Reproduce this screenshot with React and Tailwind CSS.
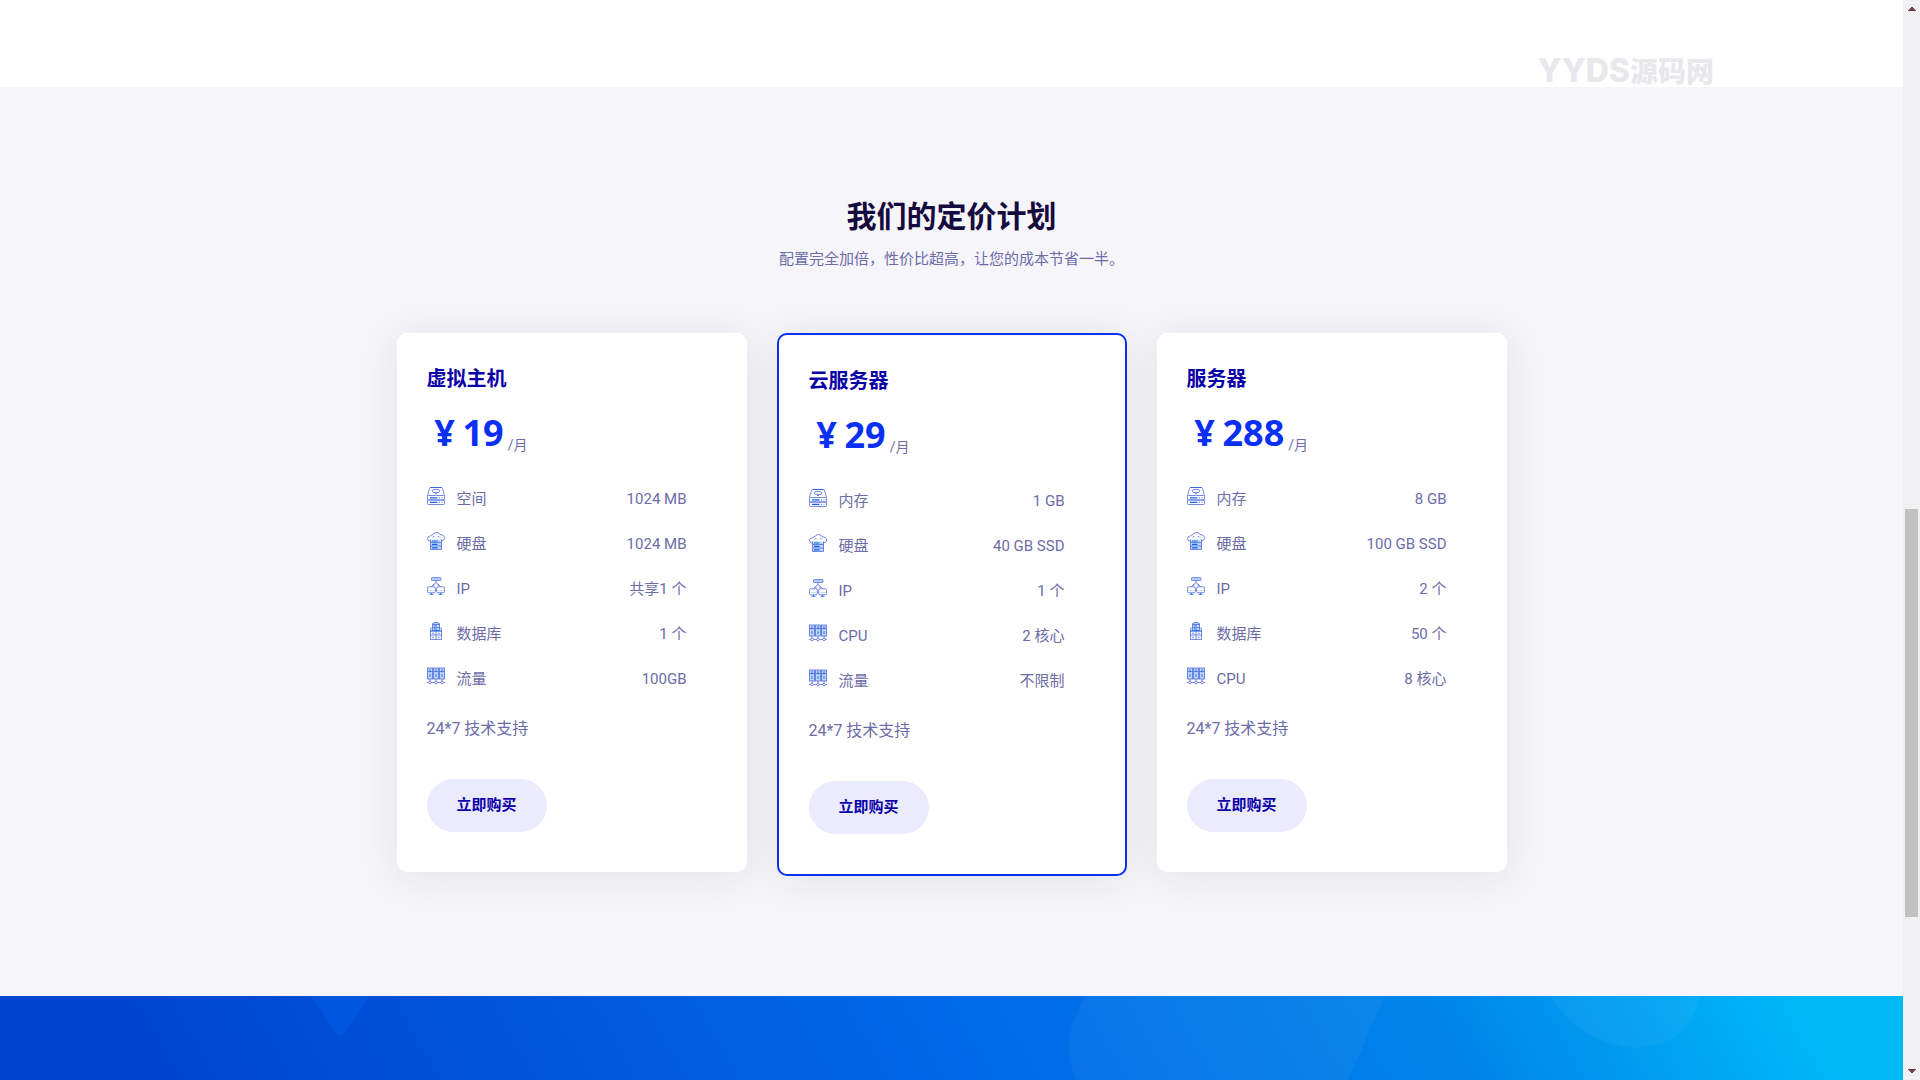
const ICON_STROKE = '#5568d8';
const ICON_ACCENT = '#1560e8';
const ICON_FILL = '#b9d8fb';

// 18px line icons, one per kind of feature
function FeatureIcon({ name }) {
  const props = {
    className: 'h-[18px] w-[18px] shrink-0',
    viewBox: '0 0 18 18',
    fill: 'none',
    stroke: ICON_STROKE,
    strokeWidth: 0.8,
    'aria-hidden': true,
  };

  switch (name) {
    case 'drive':
      return (
        <svg {...props}>
          <path d="M.5 8.500L2.500 1.500Q2.700 .5 3.700 .5H14.300Q15.300 .5 15.500 1.500L17.500 8.500" />
          <path d="M3.500 .5H14.500" stroke={ICON_ACCENT} />
          <ellipse cx="9" cy="4" rx="4" ry="1.700" />
          <path d="M7.500 5.500L9 7L10.500 5.500" />
          <rect x=".5" y="8.500" width="17" height="4.500" rx=".8" />
          <rect x=".5" y="13" width="17" height="4.500" rx=".8" />
          <path d="M3 10.800H10.500M3 15.300H10.500" stroke={ICON_ACCENT} strokeWidth="1.200" />
          <path d="M12 10.800H13M14.500 10.800H15.500M12 15.300H13M14.500 15.300H15.500" stroke={ICON_ACCENT} />
        </svg>
      );
    case 'cloud':
      return (
        <svg {...props}>
          <rect x="3.500" y="7.500" width="11" height="10" fill={ICON_FILL} stroke="none" />
          <path d="M3.500 7.500V17.500H14.500V7.500" />
          <path d="M3.500 9H2.500Q.5 8.500 .5 6.500Q.5 4 3.500 4Q4 2.500 6 2.700Q7 .5 9.500 .5Q12 .5 13 2.700Q17.500 2.700 17.500 6.200Q17.500 8.500 14.500 9" />
          <path d="M5.500 5.500Q6.200 4.500 7.500 4.800M11 4.500Q12.500 4.500 13 5.500" />
          <path d="M3.500 10.500H14.500M3.500 14H14.500" />
          <path d="M5 9H10.500M5 12.300H10.500M5 15.800H10.500" stroke={ICON_ACCENT} strokeWidth="1.200" />
        </svg>
      );
    case 'network':
      return (
        <svg {...props}>
          <rect x="4.500" y=".6" width="9.500" height="2.800" rx=".6" fill={ICON_FILL} />
          <path d="M9 3.500V5.500M9 5.500L4.500 9.500M9 5.500L13.500 9.500" />
          <path d="M6 8H7.500M10.500 8H12" stroke={ICON_ACCENT} />
          <rect x=".4" y="9.800" width="8" height="6" rx="1.500" />
          <rect x="9.600" y="9.800" width="8" height="6" rx="1.500" />
          <path d="M1 13.500H8M10 13.500H17" stroke={ICON_FILL} />
          <path d="M2.500 17.300H6.500M11.500 17.300H15.500M4.500 15.800V17.300M13.500 15.800V17.300" stroke={ICON_ACCENT} />
        </svg>
      );
    case 'database':
      return (
        <svg {...props}>
          <path d="M5.500 5V1.700Q5.500 .5 9 .5Q12.500 .5 12.500 1.700V8.500H5.500Z" fill={ICON_FILL} />
          <path d="M5.500 2.500H12.500M5.500 5.500H12.500" />
          <path d="M7 3.800H10M7 7H10" stroke={ICON_ACCENT} />
          <path d="M5.500 5.500L3.500 6.500V17.500H14.500V6.500L12.500 5.500" />
          <path d="M3.500 9H14.500" stroke={ICON_ACCENT} strokeWidth="1.200" />
          <path d="M3.500 13H14.500M9 9V17.500" />
          <path d="M5.200 11.200H7M10.800 11.200H12.600M5.200 15.300H7M10.800 15.300H12.600" stroke={ICON_ACCENT} />
        </svg>
      );
    default:
      return (
        <svg {...props}>
          {[0.5, 6.5, 12.5].map((x) => (
            <g key={x}>
              <rect x={x} y="1" width="5" height="11" fill={ICON_FILL} />
              <path d={`M${x} 4.500H${x + 5}M${x + 2.5} 12V14`} />
              <path d={`M${x + 2.5} 2V5.500M${x + 2.5} 7V10`} stroke={ICON_ACCENT} />
              <circle cx={x + 2.5} cy="15.500" r="1.300" />
            </g>
          ))}
          <path d="M0 15.500H1.700M4.300 15.500H7.700M10.300 15.500H13.700M16.300 15.500H18" />
        </svg>
      );
  }
}

const plans = [
  {
    name: '虚拟主机',
    price: '19',
    featured: false,
    features: [
      { icon: 'drive', label: '空间', value: '1024 MB' },
      { icon: 'cloud', label: '硬盘', value: '1024 MB' },
      { icon: 'network', label: 'IP', value: '共享1 个' },
      { icon: 'database', label: '数据库', value: '1 个' },
      { icon: 'servers', label: '流量', value: '100GB' },
    ],
  },
  {
    name: '云服务器',
    price: '29',
    featured: true,
    features: [
      { icon: 'drive', label: '内存', value: '1 GB' },
      { icon: 'cloud', label: '硬盘', value: '40 GB SSD' },
      { icon: 'network', label: 'IP', value: '1 个' },
      { icon: 'servers', label: 'CPU', value: '2 核心' },
      { icon: 'servers', label: '流量', value: '不限制' },
    ],
  },
  {
    name: '服务器',
    price: '288',
    featured: false,
    features: [
      { icon: 'drive', label: '内存', value: '8 GB' },
      { icon: 'cloud', label: '硬盘', value: '100 GB SSD' },
      { icon: 'network', label: 'IP', value: '2 个' },
      { icon: 'database', label: '数据库', value: '50 个' },
      { icon: 'servers', label: 'CPU', value: '8 核心' },
    ],
  },
];

function PlanCard({ name, price, featured, features }) {
  return (
    <article
      className={`rounded-[10px] bg-white px-[30px] pt-[30px] pb-10 shadow-[0_4px_40px_rgba(32,32,32,0.09)] ${
        featured ? 'border-2 border-[#0a30f0]' : ''
      }`}
    >
      <h3 className="text-xl leading-8 font-bold text-[#0a00a8]">{name}</h3>
      <div className="mt-4 flex items-end gap-1">
        <p className="flex font-['Open_Sans',sans-serif] text-4xl leading-[44px] font-bold text-[#0a30f5]">
          <span className="w-9 text-center">¥</span>
          <span>{price}</span>
        </p>
        <span className="text-sm leading-5">/月</span>
      </div>

      <ul className="mt-[22px] pr-[30px] text-[15px]">
        {features.map(({ icon, label, value }) => (
          <li key={label} className="flex h-[45px] items-center">
            <span className="pb-2">
              <FeatureIcon name={icon} />
            </span>
            <span className="ml-3">{label}</span>
            <span className="ml-auto">{value}</span>
          </li>
        ))}
      </ul>

      <p className="mt-[15px] text-base leading-6">24*7 技术支持</p>
      <button
        type="button"
        className="mt-[38px] block h-[53px] rounded-full bg-[#ebebfe] px-[30px] text-[15px] font-bold text-[#0a00a8]"
      >
        立即购买
      </button>
    </article>
  );
}

function Banner() {
  return (
    <section className="flex-1 overflow-hidden bg-[linear-gradient(60deg,#0044cf_8%,#0068e8_50%,#0085eb_76%,#00baf7_95%)]">
      <svg className="h-21 w-full" viewBox="0 0 1903 84" preserveAspectRatio="none" aria-hidden="true">
        <path d="M311 0H369L346 34Q340 46 334 34Z" fill="#0068ee" fillOpacity="0.35" />
        <path d="M1086 0H1385L1348 84H1076Q1058 42 1086 0Z" fill="#fff" fillOpacity="0.04" />
        <path d="M1550 0H1700Q1690 50 1635 52Q1580 48 1550 0Z" fill="#fff" fillOpacity="0.04" />
      </svg>
    </section>
  );
}

function Scrollbar() {
  return (
    <div className="flex w-[17px] shrink-0 flex-col items-center bg-[#f0f0f3]" aria-hidden="true">
      <svg className="h-[17px] w-[17px]" viewBox="0 0 17 17" fill="#743f4c">
        <path d="M8 7H10V8H11V9H12V10H13V11H5V10H6V9H7V8H8Z" />
      </svg>
      <div className="flex w-[13px] flex-1 flex-col">
        <div className="h-[47%]" />
        <div className="h-[39%] bg-[#c1c1c1]" />
      </div>
      <svg className="h-[17px] w-[17px]" viewBox="0 0 17 17" fill="#743f4c">
        <path d="M5 6H13V7H12V8H11V9H10V10H8V9H7V8H6V7H5Z" />
      </svg>
    </div>
  );
}

export default function App() {
  return (
    <div className="flex h-screen overflow-hidden bg-white font-['Roboto','Noto_Sans_CJK_SC',sans-serif] text-[#6c6ca8]">
      <main className="flex flex-1 flex-col">
        <div className="flex h-[87px] shrink-0 items-end justify-end pr-[189px] font-['Inter','Noto_Sans_CJK_SC',sans-serif] text-[#e8e8ec]">
          <p className="text-[28px] leading-[30px] font-black">
            <span className="text-[32px] font-extrabold">YYDS</span>源码网
          </p>
        </div>

        <section className="shrink-0 bg-[#f5f5fa] px-4 pt-[110px] pb-[120px]">
          <header className="text-center">
            <h2 className="text-3xl leading-10 font-bold text-[#160b3e]">我们的定价计划</h2>
            <p className="mt-[10px] text-[15px] leading-6">
              配置完全加倍，性价比超高，让您的成本节省一半。
            </p>
          </header>
          <div className="mx-auto mt-[62px] grid max-w-[1110px] grid-cols-3 items-start gap-[30px]">
            {plans.map((plan) => (
              <PlanCard key={plan.name} {...plan} />
            ))}
          </div>
        </section>

        <Banner />
      </main>
      <Scrollbar />
    </div>
  );
}
